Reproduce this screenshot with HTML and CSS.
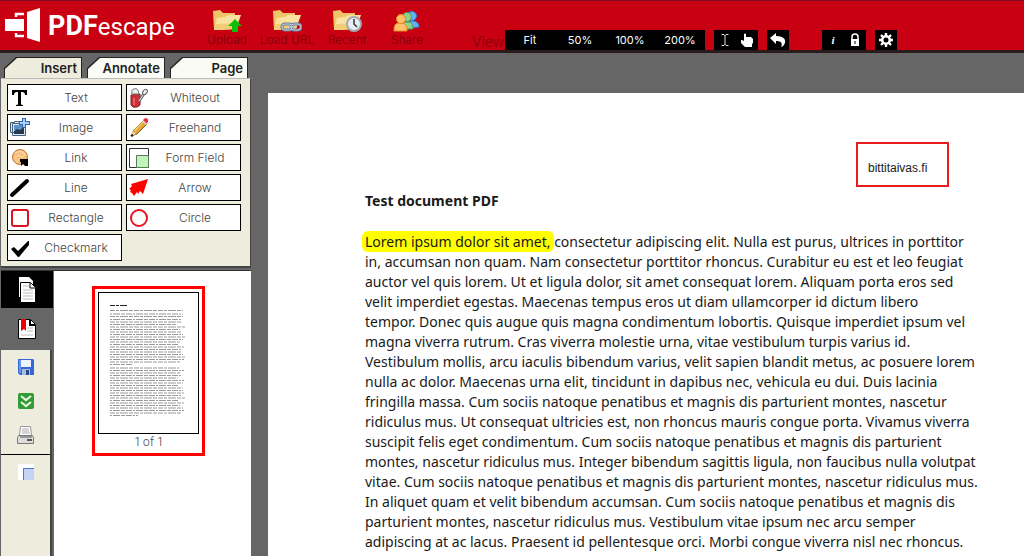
FILE: index.html
```html
<!DOCTYPE html>
<html lang="en">
<head>
  <meta charset="UTF-8">
  <meta name="viewport" content="width=device-width, initial-scale=1.0">
  <title>PDFescape</title>
  <link rel="stylesheet" href="styles.css">
</head>
<body>
  <header class="header">
    <a class="logo" href="#">
      <svg width="36" height="36" viewBox="0 0 36 36" aria-hidden="true">
        <path fill="#fff" d="M0 11h19v12H0z"/>
        <path d="M11 9V6h8M11 25v3h8" fill="none" stroke="#fff" stroke-width="2.400"/>
        <path fill="#fff" d="M22 4l13-4v34l-13-4z"/>
      </svg>
      <span class="logo-text"><b>PDF</b>escape</span>
    </a>
    <nav class="menu">
      <button class="menu-item">
        <svg width="30" height="24" viewBox="0 0 30 24" aria-hidden="true">
          <path fill="#edc467" d="M1 2l7-1 3 3h12v16L2 21z"/>
          <path fill="#fae2a0" d="M5 9l8-1 3-2h13l-5 14-22 1z"/>
          <path fill="#f2cd78" d="M4 15l22-1-2 6-22 1z"/>
          <path fill="#0bbf0b" d="M23 10l7 7h-4v6h-6v-6h-4z"/>
        </svg>
        Upload
      </button>
      <button class="menu-item">
        <svg width="30" height="24" viewBox="0 0 30 24" aria-hidden="true">
          <path fill="#edc467" d="M1 2l7-1 3 3h12v16L2 21z"/>
          <path fill="#fae2a0" d="M5 9l8-1 3-2h13l-5 14-22 1z"/>
          <path fill="#f2cd78" d="M4 15l22-1-2 6-22 1z"/>
          <g fill="none" stroke="#6d7f99" stroke-width="3"><rect x="10" y="15" width="10" height="6" rx="3"/><rect x="19" y="15" width="10" height="6" rx="3"/></g>
          <g fill="none" stroke="#c3cfdf"><rect x="10" y="15" width="10" height="6" rx="3"/><rect x="19" y="15" width="10" height="6" rx="3"/><path d="M16 18h7"/></g>
        </svg>
        Load URL
      </button>
      <button class="menu-item">
        <svg width="30" height="24" viewBox="0 0 30 24" aria-hidden="true">
          <path fill="#edc467" d="M1 2l7-1 3 3h12v16L2 21z"/>
          <path fill="#fae2a0" d="M5 9l8-1 3-2h13l-5 14-22 1z"/>
          <path fill="#f2cd78" d="M4 15l22-1-2 6-22 1z"/>
          <circle cx="22" cy="15" r="7" fill="#e8edf2" stroke="#a3a9b0" stroke-width="2"/>
          <path d="M22 10v5l3 3" fill="none" stroke="#333" stroke-width="1.5"/>
        </svg>
        Recent
      </button>
      <button class="menu-item">
        <svg width="30" height="24" viewBox="0 0 30 24" aria-hidden="true">
          <g fill="#64b3f2" stroke="#2f7fd0"><path d="M15 19c0-6 2-7 5-7s7 1 7 6z"/><circle cx="20" cy="7" r="4.500"/></g>
          <g fill="#8fd08c" stroke="#4a9a50"><path d="M9 20c0-6 2-7 6-7s6 1 6 7z"/><circle cx="15" cy="8" r="4.500"/></g>
          <g fill="#ffc06b" stroke="#f08a24"><path d="M2 22c0-7 2-8 6-8s7 1 7 8z"/><circle cx="9" cy="10" r="4.500"/></g>
        </svg>
        Share
      </button>
    </nav>
    <div class="view">
      <span class="view-label">View</span>
      <div class="tools">
        <button class="zoom">Fit</button>
        <button class="zoom">50%</button>
        <button class="zoom">100%</button>
        <button class="zoom">200%</button>
      </div>
      <div class="tools">
        <button class="tool" aria-label="Select text">
          <svg width="14" height="14" viewBox="0 0 14 14"><path d="M3.500 1.500h2.500l1 1 1-1h2.500M3.500 12.500h2.500l1-1 1 1h2.500M7 2v10" fill="none" stroke="#ddd"/></svg>
        </button>
        <button class="tool" aria-label="Pan">
          <svg width="14" height="14" viewBox="0 0 14 14"><path fill="#fff" d="M4 7V1q1-1 2 0v3h5l2 2v4l-1 1v3H5L1 10V7h1l2 1z"/></svg>
        </button>
      </div>
      <div class="tools">
        <button class="tool" aria-label="Undo">
          <svg width="16" height="14" viewBox="0 0 16 14"><path fill="#fff" d="M0 5l6-5v3c7 0 10 3 9 7q-1 3-4 4c2-4 0-6-5-6v3z"/></svg>
        </button>
      </div>
      <div class="tools tools-doc">
        <button class="tool info" aria-label="Document information">i</button>
        <button class="tool" aria-label="Security">
          <svg width="10" height="14" viewBox="0 0 10 14"><path d="M2 7V4q0-3 3-3t3 3v3" fill="none" stroke="#fff" stroke-width="1.500"/><path fill="#fff" d="M1 6h8v7H1z"/><path d="M5 8v3" stroke="#000"/></svg>
        </button>
      </div>
      <div class="tools">
        <button class="tool" aria-label="Preferences">
          <svg width="16" height="16" viewBox="0 0 16 16"><circle cx="8" cy="8" r="3.800" fill="none" stroke="#fff" stroke-width="2.600"/><path d="M8 1v3M8 12v3M1 8h3M12 8h3M3 3l2 2M11 11l2 2M3 13l2-2M11 5l2-2" stroke="#fff" stroke-width="2.400"/></svg>
        </button>
      </div>
    </div>
  </header>

  <main class="workspace">
    <aside class="sidebar">
      <div class="tabs" role="tablist">
        <button class="tab active" role="tab" aria-selected="true"><span>Insert</span></button>
        <button class="tab" role="tab" aria-selected="false"><span>Annotate</span></button>
        <button class="tab" role="tab" aria-selected="false"><span>Page</span></button>
      </div>
      <div class="insert-panel">
        <button class="insert"><svg viewBox="0 0 22 22"><path fill="#000" d="M3 3h15v5h-2q0-3-3-3h-1v12q0 1 2 1v1H7v-1q2 0 2-1V5H8Q5 5 5 8H3z"/></svg><span>Text</span></button>
        <button class="insert">
          <svg viewBox="0 0 22 22"><path fill="#d22e38" stroke="#722" d="M3 8l9-1v11q-2 3-7 2l-2-2z"/><path fill="#eee" stroke="#777" d="M4 7q-1-5 2-5 4-2 5 5z"/><path d="M6 11v7" stroke="#ee8b8b"/><path d="M11 14l6-9" stroke="#666" stroke-width="3"/><path d="M11 14l6-9" stroke="#ddd"/><ellipse cx="17" cy="5" rx="2" ry="3" transform="rotate(35 17 5)" fill="#eee" stroke="#666"/></svg>
          <span>Whiteout</span>
        </button>
        <button class="insert">
          <svg viewBox="0 0 22 22"><path fill="#dce8f5" stroke="#47617f" d="M1.500 5.500h4v-1h8v11h-12zM3.500 6.500h13v12h-13z"/><path fill="#5b91cc" d="M5 8h10v5H5z"/><path fill="#26394e" d="M5 14l3-2 3 1 4-3v7H5z"/><path d="M15 1v10M10 6h11" stroke="#3565ad" stroke-width="4"/><path d="M15 2v8M11 6h9" stroke="#a8d0ff" stroke-width="2"/></svg>
          <span>Image</span>
        </button>
        <button class="insert">
          <svg viewBox="0 0 22 22"><path fill="#e3a231" stroke="#7e5b27" d="M3 19l3-6L16 3l3 4L9 17z"/><path fill="#f3cb69" d="M6 13l9-9 1 1-9 10z"/><path fill="#e33142" d="M15 3l2-2q4 0 3 4l-2 2z"/><path fill="#ddd" d="M14 4l1-1 4 4-1 1z"/><path fill="#f1d8ad" d="M3 19l2-5 3 3z"/><path d="M3 19l2-1" stroke="#222" stroke-width="2"/></svg>
          <span>Freehand</span>
        </button>
        <button class="insert">
          <svg viewBox="0 0 22 22"><circle cx="11" cy="10" r="7.500" fill="#f7be7c" stroke="#b97632"/><path d="M6 6l5-2 5 3M5 11l5-3 3 2 4-3M7 16l3-4" fill="none" stroke="#ffe0b2"/><path fill="#000" d="M11 12h8v7h-3l-2-2-2 2v-4h-1z"/></svg>
          <span>Link</span>
        </button>
        <button class="insert"><svg viewBox="0 0 22 22"><path fill="#fff" stroke="#333" d="M1.500 1.500h19v19H1.500z"/><path fill="#bff5ba" stroke="#5d795d" d="M8.500 8.500h12v12h-12z"/></svg><span>Form Field</span></button>
        <button class="insert"><svg viewBox="0 0 22 22"><path d="M3 18L18 4" stroke="#000" stroke-width="4" stroke-linecap="round"/></svg><span>Line</span></button>
        <button class="insert"><svg viewBox="0 0 22 22"><path fill="#f00" d="M20 2l-5 15-3-3-2 3-1-2-3 4-2-3-2-1 1-2-2-1 3-3-1-2z"/></svg><span>Arrow</span></button>
        <button class="insert"><svg viewBox="0 0 22 22"><rect x="3" y="3" width="16" height="16" rx="2" fill="#fff" stroke="#d9161f" stroke-width="2"/></svg><span>Rectangle</span></button>
        <button class="insert"><svg viewBox="0 0 22 22"><circle cx="11" cy="11" r="8" fill="#fff" stroke="#e31720" stroke-width="2"/></svg><span>Circle</span></button>
        <button class="insert"><svg viewBox="0 0 22 22"><path fill="#000" d="M2 12l3-2 4 4L19 4h1v4L10 20H9z"/></svg><span>Checkmark</span></button>
      </div>

      <div class="lower">
        <div class="rail">
          <button class="rail-item pages" aria-label="Pages">
            <svg width="18" height="26" viewBox="0 0 18 26"><path fill="#fff" d="M1 0h10l4 4v16H1z"/><path fill="#fff" stroke="#000" d="M2.500 5.500h10l5 5v15h-15z"/><path d="M12 6v5h5" fill="none" stroke="#000"/><path d="M5 9h6M5 13h10M5 16h10M5 19h10M5 22h10" stroke="#bbb"/></svg>
          </button>
          <button class="rail-item bookmarks" aria-label="Bookmarks">
            <svg width="18" height="22" viewBox="0 0 18 22"><path fill="#fff" stroke="#000" d="M.500 1.500h12l5 5v14H.500z"/><path d="M12 2v5h5" fill="none" stroke="#000" stroke-width="2"/><path d="M9 10h6M9 13h6M3 17h12" stroke="#bbb"/><path fill="#e00" d="M3 1h5v12l-2-2-3 2z"/></svg>
          </button>
          <div class="rail-files">
            <button class="rail-item" aria-label="Save">
              <svg width="18" height="18" viewBox="0 0 18 18"><path fill="#3468d7" d="M1 1h15l1 1v15H3l-2-2z"/><path fill="#6796ef" d="M2 2h2v13H2z"/><path fill="#eef4ff" d="M4 2h10v7H4z"/><path fill="#a9bddb" d="M5 11h8v6H5z"/><path fill="#294a8b" d="M9 12h3v5H9z"/></svg>
            </button>
            <button class="rail-item" aria-label="Save and download">
              <svg width="18" height="18" viewBox="0 0 18 18"><rect x="1" y="1" width="16" height="16" rx="2" fill="#319b35"/><path d="M4 4l5 4 5-4M4 10l5 4 5-4" fill="none" stroke="#e8f3dc" stroke-width="2.200"/></svg>
            </button>
            <button class="rail-item" aria-label="Print">
              <svg width="18" height="18" viewBox="0 0 18 18"><path fill="#fff" stroke="#999" d="M3.500.500h10l1 9h-12z"/><path d="M5 3h7M5 5h7M5 7h8" stroke="#aaa"/><path fill="#ddd" stroke="#777" d="M1.500 9.500h14l1 2v6H.500v-6z"/><path d="M3 11h12" stroke="#555"/><path fill="#555" d="M10 13h5v2h-5z"/></svg>
            </button>
          </div>
          <button class="rail-item" aria-label="Page view">
            <svg width="18" height="18" viewBox="0 0 18 18"><path fill="#fff" d="M1 1h16v16H1z"/><path fill="#c2d3f4" d="M6 5h11v12H6z"/><path d="M6.500 17V5.500H17" fill="none" stroke="#4b7bd0"/></svg>
          </button>
        </div>
        <div class="thumbs">
          <a class="thumb" href="#page-1">
            <svg class="thumb-page" viewBox="0 0 99 140" aria-hidden="true">
              <path class="thumb-title" d="M11 12.500h17"/>
              <path class="thumb-lines" d="M11 17.500h73M11 23.500h73M11 29h72M11 34h75M11 39h72M11 44h75M11 49h70M11 54h74M11 59h71M11 64h75M11 69h70M11 75h69M11 80h70M11 85h68M11 90h73M11 95h73M11 100h74M11 105h75M11 110h74M11 115h73M11 120h72"/>
              <path class="thumb-lines alt" d="M11 21h73M11 26.500h71M11 31.500h66M11 36.500h70M11 41.500h73M11 46.500h73M11 51.500h68M11 56.500h72M11 61.500h73M11 66.500h74M11 71.500h22M11 77.500h74M11 82.500h71M11 87.500h74M11 92.500h69M11 97.500h73M11 102.500h72M11 107.500h68M11 112.500h70M11 117.500h74M11 122.500h28"/>
            </svg>
            <span class="thumb-label">1 of 1</span>
          </a>
        </div>
      </div>
    </aside>

    <section class="viewer">
      <article class="page" id="page-1">
        <div class="note">bittitaivas.fi</div>
        <h1 class="doc-title">Test document PDF</h1>
        <p class="doc-text">
          <mark class="highlight">Lorem ipsum dolor sit amet,</mark> consectetur adipiscing elit. Nulla est purus, ultrices in porttitor<br>
          in, accumsan non quam. Nam consectetur porttitor rhoncus. Curabitur eu est et leo feugiat<br>
          auctor vel quis lorem. Ut et ligula dolor, sit amet consequat lorem. Aliquam porta eros sed<br>
          velit imperdiet egestas. Maecenas tempus eros ut diam ullamcorper id dictum libero<br>
          tempor. Donec quis augue quis magna condimentum lobortis. Quisque imperdiet ipsum vel<br>
          magna viverra rutrum. Cras viverra molestie urna, vitae vestibulum turpis varius id.<br>
          Vestibulum mollis, arcu iaculis bibendum varius, velit sapien blandit metus, ac posuere lorem<br>
          nulla ac dolor. Maecenas urna elit, tincidunt in dapibus nec, vehicula eu dui. Duis lacinia<br>
          fringilla massa. Cum sociis natoque penatibus et magnis dis parturient montes, nascetur<br>
          ridiculus mus. Ut consequat ultricies est, non rhoncus mauris congue porta. Vivamus viverra<br>
          suscipit felis eget condimentum. Cum sociis natoque penatibus et magnis dis parturient<br>
          montes, nascetur ridiculus mus. Integer bibendum sagittis ligula, non faucibus nulla volutpat<br>
          vitae. Cum sociis natoque penatibus et magnis dis parturient montes, nascetur ridiculus mus.<br>
          In aliquet quam et velit bibendum accumsan. Cum sociis natoque penatibus et magnis dis<br>
          parturient montes, nascetur ridiculus mus. Vestibulum vitae ipsum nec arcu semper<br>
          adipiscing at ac lacus. Praesent id pellentesque orci. Morbi congue viverra nisl nec rhoncus.
        </p>
      </article>
    </section>
  </main>
</body>
</html>
```
FILE: styles.css
```css
* {
  box-sizing: border-box;
}

body {
  margin: 0;
  height: 100vh;
  display: flex;
  flex-direction: column;
  overflow: hidden;
  background: #666;
  font-family: Inter, sans-serif;
  font-size: 12px;
  font-weight: 300;
}

button {
  margin: 0;
  padding: 0;
  border: none;
  background: none;
  font: inherit;
  cursor: pointer;
}

svg {
  display: block;
  flex: none;
}

/* Header */
.header {
  flex: none;
  display: flex;
  height: 53px;
  border-top: 1px solid #7d0d24;
  border-bottom: 3px solid #2a1c1e;
  background: #c80012;
}

.logo {
  display: flex;
  gap: 7px;
  width: 197px;
  padding: 7px 0 0 5px;
  color: #fff;
  text-decoration: none;
}

.logo-text {
  font-family: Roboto, sans-serif;
  font-size: 24px;
  font-weight: 400;
  line-height: 36px;
}

.logo-text b {
  font-size: 27px;
}

.menu {
  display: flex;
}

.menu-item {
  display: flex;
  flex-direction: column;
  align-items: center;
  width: 60px;
  padding-top: 8px;
  line-height: 14px;
  color: #7d0008;
  white-space: nowrap;
}

.view {
  display: flex;
  align-items: flex-end;
  gap: 9px;
  margin-left: 35px;
}

.view-label {
  margin-right: -8px;
  font-size: 14px;
  line-height: 16px;
  color: #7d0008;
}

.tools {
  display: flex;
  height: 20px;
  background: #000;
  color: #fff;
}

.tools-doc {
  margin-left: 24px;
}

.zoom {
  width: 50px;
  font-size: 11px;
  font-weight: 400;
  line-height: 20px;
  color: #fff;
}

.tool {
  display: flex;
  align-items: center;
  justify-content: center;
  width: 22px;
  color: #fff;
}

.info {
  font-family: "Liberation Serif", serif;
  font-size: 11px;
  font-style: italic;
  font-weight: bold;
}

/* Left side */
.workspace {
  flex: 1;
  display: flex;
  min-height: 0;
}

.sidebar {
  flex: none;
  display: flex;
  flex-direction: column;
  width: 251px;
  padding: 4px 0 0 1px;
}

.tabs {
  display: flex;
  gap: 5px;
  padding: 0 3px;
}

.tab {
  width: 78px;
  height: 21px;
  padding: 1px;
  background: #222;
  clip-path: polygon(12px 0, 100% 0, 100% 100%, 0 100%, 0 11px);
  font-size: 13px;
  font-weight: 600;
  line-height: 20px;
  text-align: right;
  color: #222;
}

.tab span {
  display: block;
  padding-right: 4px;
  background: #fbfbf5;
  clip-path: polygon(12px 0, 100% 0, 100% 100%, 0 100%, 0 11px);
}

.tab.active span {
  background: #eeecdc;
}

.insert-panel {
  display: grid;
  grid-template-columns: 1fr 1fr;
  align-content: start;
  gap: 3px 4px;
  height: 190px;
  padding: 5px 9px 0 6px;
  border: solid #444;
  border-width: 1px 1px 2px 0;
  border-top-color: #bbb;
  background: #eeecdc;
}

.insert {
  display: flex;
  align-items: center;
  height: 27px;
  padding-left: 1px;
  border: 1px solid #000;
  background: #fff;
  color: #444;
}

.insert svg {
  width: 22px;
  height: 22px;
}

.insert span {
  flex: 1;
}

.lower {
  flex: 1;
  display: flex;
  min-height: 0;
  margin-top: 2px;
  border-top: 1px solid #333;
}

.rail {
  width: 51px;
  border-right: 2px solid #444;
  background: #eeecdc;
}

.rail-item {
  display: flex;
  align-items: center;
  justify-content: center;
  width: 100%;
  height: 34px;
}

.rail-item.pages {
  width: 52px;
  height: 37px;
  background: #000;
}

.rail-item.bookmarks {
  width: 51px;
  height: 42px;
  background: #666;
}

.rail-files {
  padding-bottom: 2px;
  border-bottom: 1px solid #000;
}

.thumbs {
  flex: 1;
  margin-left: 2px;
  padding: 15px 46px 15px 38px;
  background: #fff;
}

.thumb {
  display: block;
  padding: 3px;
  border: 3px solid #f00;
  color: #555;
  text-align: center;
  text-decoration: none;
}

.thumb-page {
  width: 100%;
  border: 1px solid #000;
}

.thumb-title,
.thumb-lines {
  fill: none;
  stroke: #999;
  stroke-dasharray: 5 1 3 1 8 1 4 1;
}

.thumb-lines.alt {
  stroke-dasharray: 2 1 7 1 4 1 6 1;
}

.thumb-title {
  stroke: #222;
}

.thumb-label {
  display: block;
  line-height: 16px;
}

/* Document */
.viewer {
  flex: 1;
  min-width: 0;
  padding: 40px 0 0 17px;
  overflow: hidden;
}

.page {
  position: relative;
  min-height: 100%;
  padding: 98px 0 0 97px;
  background: #fff;
  color: #1a1a1a;
  font-family: "Noto Sans", sans-serif;
  font-size: 14px;
  font-weight: 400;
  line-height: 20px;
  white-space: nowrap;
}

/* annotation placed over the page */
.note {
  position: absolute;
  top: 49px;
  left: 588px;
  padding: 14px 20px 7px 10px;
  border: 2px solid #e81c1c;
  font-family: "Liberation Sans", sans-serif;
  font-size: 12px;
}

.doc-title {
  margin: 0 0 21px;
  font-size: 14px;
  font-weight: bold;
}

.doc-text {
  margin: 0;
}

.highlight {
  margin: 0 -3px;
  padding: 1px 3px;
  border-radius: 6px;
  background: #ff0;
  color: inherit;
}
```
